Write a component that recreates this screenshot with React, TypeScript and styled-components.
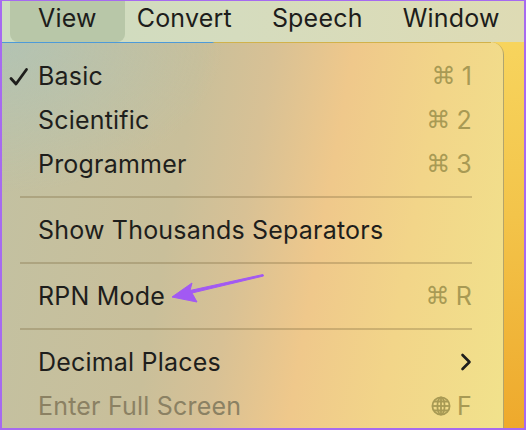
import React from "react";
import styled, { createGlobalStyle } from "styled-components";

const GlobalStyle = createGlobalStyle`
  html, body {
    margin: 0;
    padding: 0;
    width: 526px;
    height: 430px;
    overflow: hidden;
  }
  * { box-sizing: border-box; }
`;

const Frame = styled.div`
  width: 526px;
  height: 430px;
  border: 2px solid #a66af0;
  border-top-width: 1px;
  display: flex;
  flex-direction: column;
  font-family: Inter, "Liberation Sans", "DejaVu Sans", sans-serif;
  background: linear-gradient(180deg, #f8d862 0%, #f3c44a 50%, #eea92c 100%);
  overflow: hidden;
`;

const MenuBar = styled.div`
  height: 41px;
  flex: none;
  display: flex;
  align-items: stretch;
  padding-left: 8px;
  background: linear-gradient(90deg, #cddcc0 0%, #d5dcbe 45%, #dedbb4 100%);
`;

const BarItem = styled.div<{ $active?: boolean }>`
  display: flex;
  align-items: center;
  padding: ${(p) => (p.$active ? "0 28px 8px 28px" : "0 40px 8px 0")};
  margin-right: ${(p) => (p.$active ? "12px" : "0")};
  font-size: 25px;
  letter-spacing: 0.2px;
  color: #1d1d1b;
  border-radius: 0 0 8px 8px;
  background: ${(p) => (p.$active ? "#b8c7a8" : "transparent")};
`;

const Body = styled.div`
  flex: 1;
  display: flex;
  min-height: 0;
`;

const Panel = styled.div`
  width: 502px;
  flex: none;
  position: relative;
  padding-top: 12px;
  border-top-right-radius: 13px;
  border-right: 1px solid rgba(170, 140, 60, 0.55);
  background:
    radial-gradient(ellipse 220px 150px at 0% 0%, rgba(172, 196, 186, 0.7), rgba(172, 196, 186, 0) 100%),
    linear-gradient(100deg, #c2c1a2 0%, #c9bf9a 35%, #d8c195 48%, #efc88b 62%, #f2d589 78%, #f1e28c 100%);
`;

const TopEdge = styled.div`
  position: absolute;
  top: 0;
  left: 0;
  right: 12px;
  height: 1px;
  background: linear-gradient(90deg, #4d9ad8 0%, #4d9ad8 43%, #d2b24a 43.5%, #d2b24a 100%);
`;

const Item = styled.div<{ $disabled?: boolean }>`
  height: 44px;
  display: flex;
  align-items: center;
  position: relative;
  padding: 0 31px 0 36px;
  font-size: 25px;
  letter-spacing: 0.2px;
  color: ${(p) => (p.$disabled ? "#8b8163" : "#1e1e1c")};
`;

const Check = styled.span`
  position: absolute;
  left: 6px;
  top: 10px;
  width: 22px;
  height: 22px;
`;

const Label = styled.span`
  flex: 1;
`;

const Shortcut = styled.span`
  display: flex;
  align-items: center;
  gap: 6px;
  color: #a89a54;
  font-size: 25px;
`;

const Cmd = styled.span`
  font-family: "DejaVu Sans", sans-serif;
  font-size: 24px;
`;

const Separator = styled.div`
  height: 22px;
  display: flex;
  align-items: center;
  padding: 0 31px 0 18px;
  &::after {
    content: "";
    flex: 1;
    height: 2px;
    background: rgba(120, 100, 55, 0.3);
  }
`;

const Arrow = styled.svg`
  position: absolute;
  left: 166px;
  top: 222px;
`;

type Entry =
  | { kind: "item"; label: string; key?: string; checked?: boolean; sub?: boolean; globe?: boolean; disabled?: boolean }
  | { kind: "sep" };

const entries: Entry[] = [
  { kind: "item", label: "Basic", key: "1", checked: true },
  { kind: "item", label: "Scientific", key: "2" },
  { kind: "item", label: "Programmer", key: "3" },
  { kind: "sep" },
  { kind: "item", label: "Show Thousands Separators" },
  { kind: "sep" },
  { kind: "item", label: "RPN Mode", key: "R" },
  { kind: "sep" },
  { kind: "item", label: "Decimal Places", sub: true },
  { kind: "item", label: "Enter Full Screen", key: "F", globe: true, disabled: true },
];

function Globe() {
  return (
    <svg width="20" height="20" viewBox="0 0 20 20" fill="none" stroke="#a89a54" strokeWidth="1.8">
      <circle cx="10" cy="10" r="8.6" />
      <ellipse cx="10" cy="10" rx="3.6" ry="8.6" />
      <line x1="10" y1="1.4" x2="10" y2="18.6" />
      <line x1="1.4" y1="10" x2="18.6" y2="10" />
      <path d="M3 5.5 H17 M3 14.5 H17" />
    </svg>
  );
}

export default function App() {
  return (
    <>
      <GlobalStyle />
      <Frame>
        <MenuBar>
          <BarItem $active>View</BarItem>
          <BarItem>Convert</BarItem>
          <BarItem>Speech</BarItem>
          <BarItem>Window</BarItem>
        </MenuBar>
        <Body>
          <Panel>
            <TopEdge />
            {entries.map((e, i) =>
              e.kind === "sep" ? (
                <Separator key={i} />
              ) : (
                <Item key={i} $disabled={e.disabled}>
                  {e.checked && (
                    <Check>
                      <svg width="22" height="22" viewBox="0 0 22 22" fill="none" stroke="#1e1e1c" strokeWidth="2.8" strokeLinecap="round" strokeLinejoin="round">
                        <path d="M3 12.5 L8 18 L18.5 3.5" />
                      </svg>
                    </Check>
                  )}
                  <Label>{e.label}</Label>
                  {e.sub && (
                    <svg width="12" height="18" viewBox="0 0 12 18" fill="none" stroke="#1e1e1c" strokeWidth="2.6" strokeLinecap="round" strokeLinejoin="round">
                      <path d="M2.5 2 L9.5 9 L2.5 16" />
                    </svg>
                  )}
                  {e.key && (
                    <Shortcut>
                      {e.globe ? <Globe /> : <Cmd>⌘</Cmd>}
                      {e.key}
                    </Shortcut>
                  )}
                </Item>
              )
            )}
            <Arrow width="100" height="40" viewBox="0 0 100 40">
              <path
                d="M4 33 L24 19 L22 26.5 L95 10.5 L95.5 12 L24 29 L29 38 Z"
                fill="#a259f3"
                stroke="#a259f3"
                strokeWidth="1"
                strokeLinejoin="round"
              />
            </Arrow>
          </Panel>
        </Body>
      </Frame>
    </>
  );
}
